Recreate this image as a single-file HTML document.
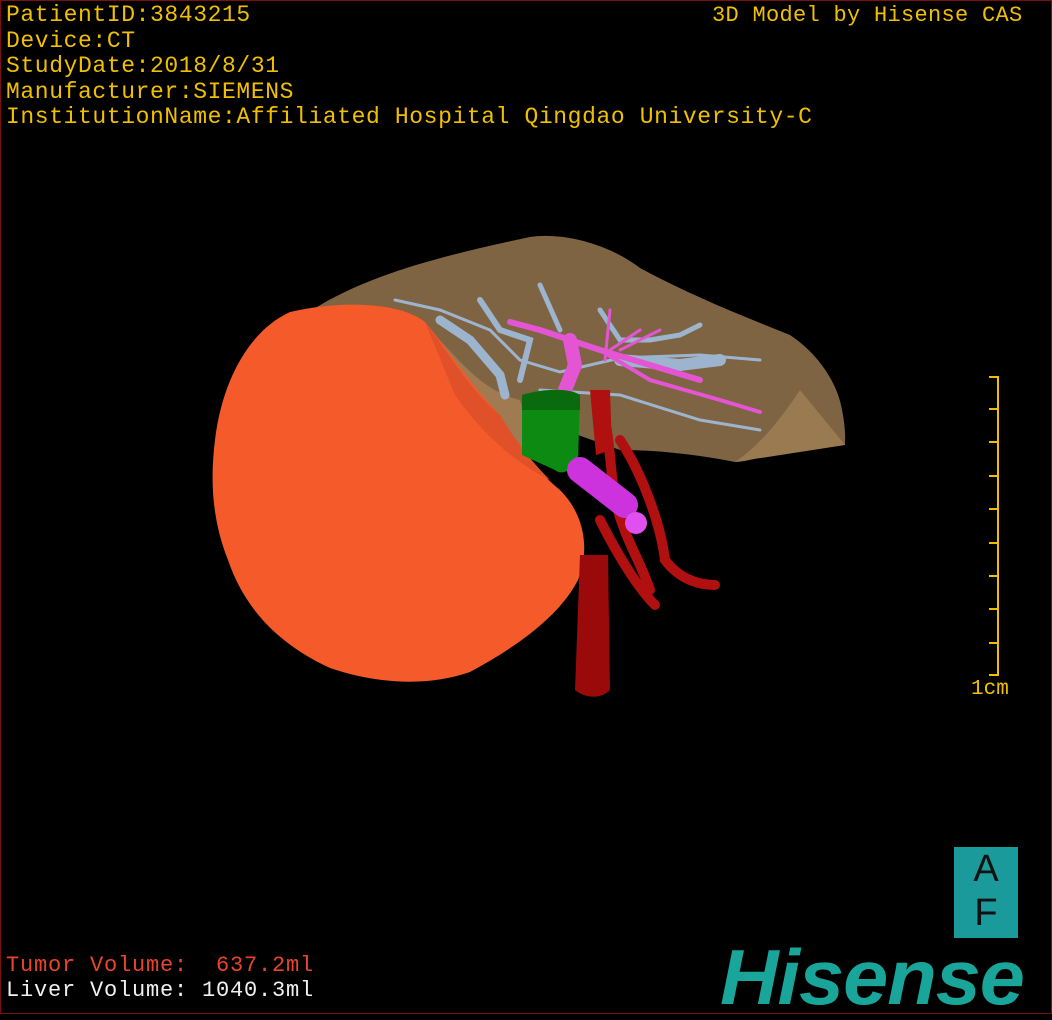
<!DOCTYPE html>
<html><head><meta charset="utf-8"><style>
html,body{margin:0;padding:0;background:#000;}
#f{position:relative;width:1052px;height:1020px;background:#000;overflow:hidden;font-family:"Liberation Mono","Noto Sans CJK SC",monospace;}
.b{position:absolute;border:1px solid #7a1010;left:0;top:0;width:1050px;height:1012px;}
.t{position:absolute;color:#f0c000;font-size:23px;white-space:pre;line-height:25.6px;}
svg{position:absolute;left:0;top:0;}
</style></head><body><div id="f">
<div class="b"></div>
<svg width="1052" height="1020">
<path d="M312,310 C360,280 420,260 530,237 C565,232 610,245 640,268 C690,295 740,315 790,335 C820,355 838,385 842,410 C846,430 845,440 845,445 L800,432 L785,440 C770,455 750,462 735,462 C700,455 660,450 620,450 L480,400 L318,320 Z" fill="#7e6442"/>
<path d="M735,462 C760,445 780,420 800,390 L845,445 Z" fill="#9a7a50"/>
<path d="M430,330 C460,360 480,390 520,400 L540,460 L500,440 Z" fill="#a07a50"/>
<g stroke="#9db4cf" stroke-linecap="round" fill="none">
<path d="M395,300 L440,310 L490,330 L520,360 L560,372 L620,358 L700,355 L760,360" stroke-width="3"/>
<path d="M440,320 L470,340 L500,375 L505,395" stroke-width="9"/>
<path d="M480,300 L500,330 L530,340 L520,380" stroke-width="6"/>
<path d="M540,285 L560,330 M600,310 L620,340 L650,340 L680,335 L700,325" stroke-width="5"/>
<path d="M620,360 L680,365 L720,360" stroke-width="12"/>
<path d="M540,390 L620,395 L700,420 L760,430" stroke-width="3"/>
</g>
<g stroke="#e455d4" stroke-linecap="round" fill="none">
<path d="M510,322 L540,330 L570,340 L600,350 L650,365 L700,380" stroke-width="6"/>
<path d="M570,340 L575,365 L565,390" stroke-width="14"/>
<path d="M600,350 L650,380 L720,400 L760,412" stroke-width="4"/>
<path d="M610,310 L605,360 M640,330 L610,350 M660,330 L620,350" stroke-width="3"/>
</g>
<path d="M215,440 C222,380 250,330 290,312 C340,300 400,302 425,322 C445,345 470,385 500,415 C512,440 530,465 560,490 C585,515 590,550 578,580 C560,615 520,645 470,672 C430,686 380,685 330,668 C280,645 245,610 228,560 C212,520 210,480 215,440 Z" fill="#f45a2a"/>
<path d="M425,322 C450,355 470,390 500,415 C515,440 530,460 550,480 C510,460 480,430 455,395 Z" fill="#e0512a"/>
<path d="M585,555 L608,555 L610,690 C600,700 585,698 575,690 L580,555 Z" fill="#9a0a0a"/>
<path d="M600,400 C610,430 610,470 615,500 C625,540 640,560 650,590 M620,440 C640,470 660,520 665,560 C680,580 700,585 715,585 M600,520 C620,560 640,590 655,605" stroke="#b01010" stroke-width="10" fill="none" stroke-linecap="round"/>
<path d="M590,390 L610,390 L612,450 L596,455 Z" fill="#b01010"/>
<path d="M522,400 C540,392 570,390 580,395 L578,462 C570,472 560,475 555,470 L522,455 Z" fill="#0d8a12"/>
<path d="M522,395 C545,388 570,388 580,395 L580,410 L522,410 Z" fill="#0a6a0e"/>
<path d="M580,470 L625,505" stroke="#cc33dd" stroke-width="26" stroke-linecap="round"/>
<circle cx="636" cy="523" r="11" fill="#e050f0"/>
<g stroke="#f0c000" stroke-width="2">
<line x1="998" y1="376" x2="998" y2="676"/>
<line x1="989" y1="377" x2="998" y2="377"/><line x1="989" y1="409" x2="998" y2="409"/><line x1="989" y1="442" x2="998" y2="442"/><line x1="989" y1="476" x2="998" y2="476"/><line x1="989" y1="509" x2="998" y2="509"/><line x1="989" y1="543" x2="998" y2="543"/><line x1="989" y1="576" x2="998" y2="576"/><line x1="989" y1="609" x2="998" y2="609"/><line x1="989" y1="643" x2="998" y2="643"/><line x1="989" y1="675" x2="998" y2="675"/>
</g>
</svg>
<div class="t" style="left:6px;top:3px;letter-spacing:0.6px">PatientID:3843215
Device:CT
StudyDate:2018/8/31
Manufacturer:SIEMENS
InstitutionName:Affiliated Hospital Qingdao University-C</div>
<div class="t" style="left:712px;top:3px;font-size:22px;letter-spacing:0.3px">3D Model by Hisense CAS</div>
<div class="t" style="left:971px;top:677px;font-size:21px">1cm</div>
<div class="t" style="left:6px;top:953px;color:#e8452a;font-size:22px;letter-spacing:0.8px">Tumor Volume:  637.2ml</div>
<div class="t" style="left:6px;top:978px;color:#f0f0f0;font-size:22px;letter-spacing:0.8px">Liver Volume: 1040.3ml</div>
<div style="position:absolute;left:954px;top:847px;width:64px;height:91px;background:#1a9a9a;font-family:'Liberation Sans',sans-serif;color:#111;font-size:38px;text-align:center;line-height:44px">A<br>F</div>
<div style="position:absolute;left:720px;top:938px;font-family:'Liberation Sans',sans-serif;font-weight:bold;font-style:italic;font-size:78px;line-height:78px;color:#1aa59a;letter-spacing:-1px;transform:scaleX(1.04);transform-origin:left top">Hisense</div>
</div></body></html>
